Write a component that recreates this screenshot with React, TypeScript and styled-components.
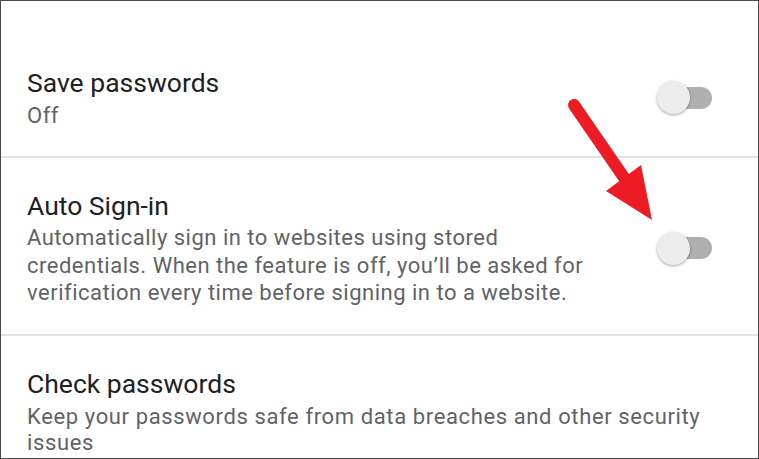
import styled, { createGlobalStyle } from 'styled-components'

const GlobalStyle = createGlobalStyle`
  html, body {
    margin: 0;
    padding: 0;
    background: #ffffff;
  }
  body {
    font-family: Roboto, 'Noto Sans', sans-serif;
  }
`

const Frame = styled.div`
  position: relative;
  width: 759px;
  height: 459px;
  box-sizing: border-box;
  border: 1px solid #4a4a4a;
  background: #ffffff;
  overflow: hidden;
`

type RowProps = {
  top: number
  bottom: number
}

const SettingRow = styled.div<RowProps>`
  display: flex;
  align-items: center;
  justify-content: space-between;
  padding: ${({ top }) => top}px 46px ${({ bottom }) => bottom}px 26px;
`

const Divider = styled.div`
  height: 2px;
  background: #e3e3e3;
`

const TextBlock = styled.div`
  display: flex;
  flex-direction: column;
`

const Title = styled.div`
  font-size: 26.5px;
  line-height: 32px;
  color: #202124;
`

type SummaryProps = {
  lead: number
  offset: number
  spacing: number
}

const Summary = styled.div<SummaryProps>`
  margin-top: ${({ offset }) => offset}px;
  font-size: 22px;
  letter-spacing: ${({ spacing }) => spacing}px;
  line-height: ${({ lead }) => lead}px;
  color: #5f6368;
  white-space: pre-line;
`

const Track = styled.div`
  position: relative;
  flex: none;
  width: 54px;
  height: 22px;
  border-radius: 11px;
  background: #b0b0b0;
  display: flex;
  align-items: center;
`

const Thumb = styled.div`
  position: absolute;
  left: -1px;
  width: 33px;
  height: 33px;
  border-radius: 50%;
  background: #ececec;
  box-shadow: 0 1px 3px rgba(0, 0, 0, 0.35);
`

const Arrow = styled.svg`
  position: absolute;
  left: 0;
  top: 0;
  pointer-events: none;
`

const Toggle = () => (
  <Track>
    <Thumb />
  </Track>
)

type SettingProps = {
  title: string
  summary: string
  top: number
  bottom: number
  lead?: number
  offset?: number
  spacing?: number
  toggle?: boolean
}

const Setting = ({
  title,
  summary,
  top,
  bottom,
  lead = 27.5,
  offset = 2,
  spacing = 0.5,
  toggle,
}: SettingProps) => (
  <SettingRow top={top} bottom={bottom}>
    <TextBlock>
      <Title>{title}</Title>
      <Summary lead={lead} offset={offset} spacing={spacing}>
        {summary}
      </Summary>
    </TextBlock>
    {toggle && <Toggle />}
  </SettingRow>
)

export default function App() {
  return (
    <>
      <GlobalStyle />
      <Frame>
        <Setting
          title="Save passwords"
          summary="Off"
          top={66}
          bottom={28}
          offset={5}
          lead={24}
          toggle
        />
        <Divider />
        <Setting
          title="Auto Sign-in"
          summary={
            'Automatically sign in to websites using stored\ncredentials. When the feature is off, you\u2019ll be asked for\nverification every time before signing in to a website.'
          }
          top={32}
          bottom={27}
          toggle
        />
        <Divider />
        <Setting
          title="Check passwords"
          summary={
            'Keep your passwords safe from data breaches and other security\nissues'
          }
          top={32}
          bottom={10}
          lead={26}
          offset={4}
          spacing={0.62}
        />
        <Arrow width="759" height="459" viewBox="0 0 759 459">
          <line
            x1="573"
            y1="104"
            x2="626"
            y2="181"
            stroke="#ed1c24"
            strokeWidth="12"
            strokeLinecap="round"
          />
          <polygon points="605,190 640,164 651,219" fill="#ed1c24" />
        </Arrow>
      </Frame>
    </>
  )
}
